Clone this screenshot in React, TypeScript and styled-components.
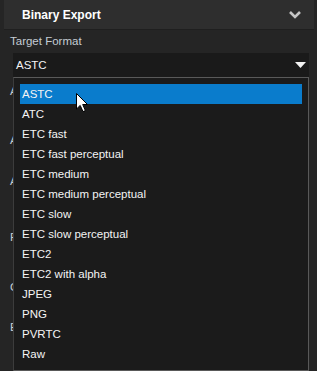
import React from 'react';
import styled, { createGlobalStyle } from 'styled-components';

const formats = [
  'ASTC',
  'ATC',
  'ETC fast',
  'ETC fast perceptual',
  'ETC medium',
  'ETC medium perceptual',
  'ETC slow',
  'ETC slow perceptual',
  'ETC2',
  'ETC2 with alpha',
  'JPEG',
  'PNG',
  'PVRTC',
  'Raw',
];

// labels of the fields that the open list covers
const hiddenFields = [
  { label: 'Astc Block Size', height: 49 },
  { label: 'Astc Quality', height: 41 },
  { label: 'Alpha Mode', height: 56 },
  { label: 'Pixel Format', height: 50 },
  { label: 'Compression', height: 40 },
  { label: 'Export Mipmaps', height: 40 },
];

export default function App() {
  const selected = 'ASTC';
  return (
    <Page>
      <GlobalStyle />
      <Header>
        <Title>Binary Export</Title>
        <svg width="14" height="10" viewBox="0 0 14 10">
          <polyline points="2,2 7,7 12,2" fill="none" stroke="#c4c4c4" strokeWidth="2.6" />
        </svg>
      </Header>
      <Field>
        <Label>Target Format</Label>
        <Select>
          <span>{selected}</span>
          <svg width="11" height="6" viewBox="0 0 11 6">
            <polygon points="0,0 11,0 5.5,6" fill="#f2f2f2" />
          </svg>
        </Select>
      </Field>
      <Fields>
        {hiddenFields.map((f) => (
          <HiddenRow key={f.label} $height={f.height}>
            <Label>{f.label}</Label>
          </HiddenRow>
        ))}
      </Fields>
      <Popup>
        {formats.map((f) => (
          <Item key={f} $active={f === selected}>
            {f}
          </Item>
        ))}
      </Popup>
      <Cursor width="13" height="20" viewBox="0 0 13 20">
        <path
          d="M0.5,0.5 L0.5,16 L4.2,12.4 L7,18.6 L9.4,17.6 L6.7,11.5 L11.5,11.5 Z"
          fill="#ffffff"
          stroke="#000000"
          strokeWidth="1"
          strokeLinejoin="miter"
        />
      </Cursor>
    </Page>
  );
}

const GlobalStyle = createGlobalStyle`
  body {
    margin: 0;
    background: #252525;
    font-family: "Liberation Sans", Arial, sans-serif;
  }
`;

const Page = styled.div`
  position: relative;
  width: 317px;
  height: 371px;
  overflow: hidden;
  background: #252525;
`;

const Header = styled.div`
  display: flex;
  align-items: center;
  justify-content: space-between;
  height: 29px;
  margin: 0 3px 0 4px;
  padding: 0 12px 0 18px;
  background: #2e2e2e;
  border-bottom: 1px solid #1f1f1f;
`;

const Title = styled.div`
  color: #ffffff;
  font-size: 12px;
  font-weight: bold;
`;

const Field = styled.div`
  display: flex;
  flex-direction: column;
  padding: 3px 8px 0 10px;
`;

const Label = styled.div`
  color: #c4ccd4;
  font-size: 11.5px;
  line-height: 16px;
  white-space: nowrap;
`;

const Select = styled.div`
  display: flex;
  align-items: center;
  justify-content: space-between;
  height: 24px;
  margin: 4px 0 0 3px;
  padding: 0 3px 0 3px;
  background: #1a1a1a;
  color: #f4f4f4;
  font-size: 11.5px;
`;

const Fields = styled.div`
  display: flex;
  flex-direction: column;
  padding: 6px 0 0 10px;
`;

const HiddenRow = styled.div<{ $height: number }>`
  height: ${(p) => p.$height}px;
`;

const Popup = styled.div`
  position: absolute;
  left: 13px;
  top: 77px;
  width: 282px;
  padding: 6px;
  background: #1b1b1b;
  border: 1px solid #595959;
  border-left-color: #3c3c3c;
`;

const Item = styled.div<{ $active: boolean }>`
  height: 20px;
  line-height: 20px;
  padding-left: 2px;
  color: #f4f4f4;
  font-size: 11.5px;
  background: ${(p) => (p.$active ? '#0a7ccc' : 'transparent')};
`;

const Cursor = styled.svg`
  position: absolute;
  left: 76px;
  top: 93px;
`;
